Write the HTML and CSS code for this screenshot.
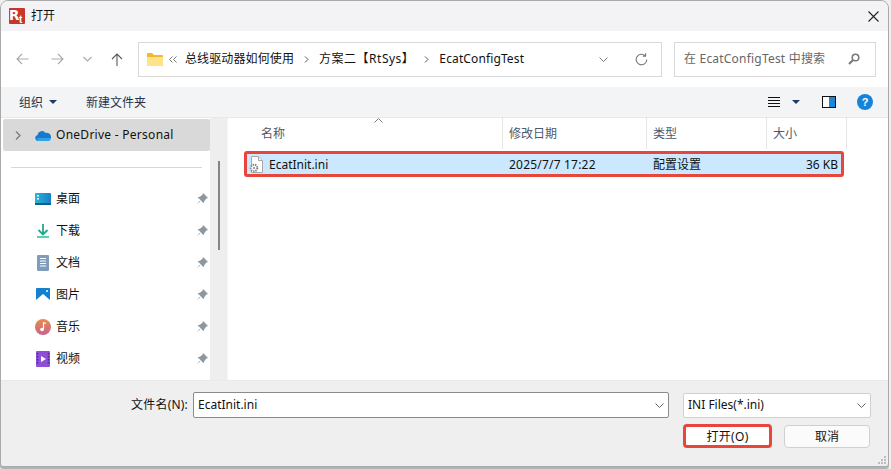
FILE: index.html

```html
<!DOCTYPE html>
<html lang="zh-CN">
<head>
    <meta charset="UTF-8">
    <meta name="viewport" content="width=device-width, initial-scale=1.0">
    <title>打开</title>
    <link rel="stylesheet" href="styles.css">
</head>
<body>
    <div class="dialog">
        <!-- Title bar -->
        <header class="titlebar">
            <svg class="app-logo" width="16" height="16" viewBox="0 0 16 16">
                <rect width="16" height="16" rx="1" fill="#c8352b"/>
                <text x="0" y="11.500" font-family="DejaVu Sans" font-weight="700" font-size="13.500" fill="#fff">R</text>
                <text x="10" y="14.500" font-family="Liberation Sans" font-weight="700" font-size="10" fill="#fff">t</text>
            </svg>
            <span class="title-text">打开</span>
            <svg class="close-icon" width="11" height="11" viewBox="0 0 11 11"><path d="M.5.5l10 10M10.500.5l-10 10" stroke="#222" stroke-width="1.100" fill="none"/></svg>
        </header>

        <!-- Address row -->
        <div class="navrow">
            <svg class="nav-btn" width="13" height="12" viewBox="0 0 13 12"><path d="M12.500 6H1M6 1L1 6l5 5" stroke="#a9a9a9" stroke-width="1.100" fill="none"/></svg>
            <svg class="nav-btn fwd" width="13" height="12" viewBox="0 0 13 12"><path d="M.5 6H12M7 1l5 5-5 5" stroke="#a9a9a9" stroke-width="1.100" fill="none"/></svg>
            <svg class="nav-btn down" width="9" height="6" viewBox="0 0 9 6"><path d="M.5 1l4 4 4-4" stroke="#a9a9a9" stroke-width="1.100" fill="none"/></svg>
            <svg class="nav-btn up" width="12" height="13" viewBox="0 0 12 13"><path d="M6 13V1M1 6l5-5 5 5" stroke="#5a5a5a" stroke-width="1.100" fill="none"/></svg>
            <div class="address">
                <svg class="folder" width="16" height="13" viewBox="0 0 16 13">
                    <path d="M0 1q0-1 1-1h4l2 2h8q1 0 1 1v9q0 1-1 1H1q-1 0-1-1z" fill="#f2b92e"/>
                    <path d="M0 4h16v8q0 1-1 1H1q-1 0-1-1z" fill="#fde38a"/>
                </svg>
                <svg class="crumb-more" width="8" height="7" viewBox="0 0 8 7"><path d="M3.500.5l-3 3 3 3M7.500.5l-3 3 3 3" stroke="#777" fill="none"/></svg>
                <span class="crumb">总线驱动器如何使用</span>
                <svg class="crumb-sep" width="5" height="7" viewBox="0 0 5 7"><path d="M1 .5l3 3-3 3" stroke="#555" fill="none"/></svg>
                <span class="crumb crumb-wide">方案二【RtSys】</span>
                <svg class="crumb-sep" width="5" height="7" viewBox="0 0 5 7"><path d="M1 .5l3 3-3 3" stroke="#555" fill="none"/></svg>
                <span class="crumb">EcatConfigTest</span>
                <svg class="addr-down" width="9" height="5" viewBox="0 0 9 5"><path d="M.5.5l4 4 4-4" stroke="#777" fill="none"/></svg>
                <svg class="refresh" width="13" height="13" viewBox="0 0 13 13"><path d="M11.800 6.500a5.300 5.300 0 1 1-1.700-3.900M10.600.3v2.800H7.800" stroke="#777" stroke-width="1.100" fill="none"/></svg>
            </div>
            <div class="search">
                <span>在 EcatConfigTest 中搜索</span>
                <svg width="12" height="12" viewBox="0 0 12 12"><circle cx="7.500" cy="4.500" r="3.300" stroke="#777" stroke-width="1.500" fill="none"/><path d="M5 7L1 11" stroke="#777" stroke-width="2"/></svg>
            </div>
        </div>

        <!-- Toolbar -->
        <div class="toolbar">
            <span class="tool">组织</span>
            <i class="caret"></i>
            <span class="tool new-folder">新建文件夹</span>
            <div class="tool-right">
                <svg width="12" height="11" viewBox="0 0 12 11"><path d="M0 .5h12M0 3.500h12M0 6.500h12M0 9.500h12" stroke="#111"/></svg>
                <i class="caret view-caret"></i>
                <svg class="pane-icon" width="14" height="12" viewBox="0 0 14 12"><rect x=".5" y=".5" width="13" height="11" fill="#fff" stroke="#111"/><rect x="7" y="1" width="6" height="10" fill="#1a86d8"/></svg>
                <svg class="help-icon" width="16" height="16" viewBox="0 0 16 16"><circle cx="8" cy="8" r="8" fill="#1683d8"/><text x="8" y="12" text-anchor="middle" font-family="Liberation Sans" font-weight="700" font-size="11" fill="#fff">?</text></svg>
            </div>
        </div>

        <!-- Main area -->
        <div class="main">
            <aside class="sidebar">
                <div class="tree-onedrive">
                    <svg class="tree-arrow" width="6" height="9" viewBox="0 0 6 9"><path d="M1 .5l4 4-4 4" stroke="#777" stroke-width="1.200" fill="none"/></svg>
                    <svg width="16" height="11" viewBox="0 0 16 11"><path d="M3 11a3 3 0 0 1-.5-5.900A4.500 4.500 0 0 1 10.600 3 3.500 3.500 0 0 1 13 11z" fill="#1a78d0"/><path d="M3 11a3 3 0 0 1-.5-3h13q.5 3-2.500 3z" fill="#2da3e8"/></svg>
                    <span>OneDrive - Personal</span>
                </div>
                <hr class="side-rule">
                <ul class="quick-list">
                    <li>
                        <span class="quick-icon"><svg width="16" height="12" viewBox="0 0 16 12"><defs><linearGradient id="desk" x1="0" y1="0" x2="1" y2="0"><stop offset="0" stop-color="#25b7d8"/><stop offset="1" stop-color="#1a7fc8"/></linearGradient></defs><rect width="16" height="12" rx="1" fill="url(#desk)"/><rect x="2" y="2" width="2" height="1.500" fill="#fff"/><rect x="2" y="5" width="2" height="1.500" fill="#fff"/><rect y="10" width="16" height="2" fill="#10608f"/></svg></span>
                        <span class="quick-text">桌面</span>
                        <svg class="pin" width="12" height="12" viewBox="0 0 11 11"><path d="M6.500 0L11 4.500 9.500 5 7.500 7.500 7 9.500 1.500 4 3.500 3.500 6 1.500zM3.500 7L.5 10.500 4 7.500z" fill="#8d97a1"/></svg>
                    </li>
                    <li>
                        <span class="quick-icon"><svg width="14" height="14" viewBox="0 0 14 14"><path d="M7 0v10M2.500 6L7 10.500 11.500 6" stroke="#23a98d" stroke-width="1.800" fill="none"/><path d="M1 13h12" stroke="#22c29a" stroke-width="1.500"/></svg></span>
                        <span class="quick-text">下载</span>
                        <svg class="pin" width="12" height="12" viewBox="0 0 11 11"><path d="M6.500 0L11 4.500 9.500 5 7.500 7.500 7 9.500 1.500 4 3.500 3.500 6 1.500zM3.500 7L.5 10.500 4 7.500z" fill="#8d97a1"/></svg>
                    </li>
                    <li>
                        <span class="quick-icon"><svg width="12" height="16" viewBox="0 0 12 16"><rect width="12" height="16" rx="1" fill="#7f9cbc"/><path d="M3 3.500h6M3 6h6M3 8.500h6M3 11h6" stroke="#fff"/></svg></span>
                        <span class="quick-text">文档</span>
                        <svg class="pin" width="12" height="12" viewBox="0 0 11 11"><path d="M6.500 0L11 4.500 9.500 5 7.500 7.500 7 9.500 1.500 4 3.500 3.500 6 1.500zM3.500 7L.5 10.500 4 7.500z" fill="#8d97a1"/></svg>
                    </li>
                    <li>
                        <span class="quick-icon"><svg width="14" height="14" viewBox="0 0 14 14"><rect width="14" height="14" rx="1" fill="#1580d0"/><path d="M0 12l7-6 7 6v2H0z" fill="#fff"/><circle cx="11" cy="3" r="1" fill="#fff"/></svg></span>
                        <span class="quick-text">图片</span>
                        <svg class="pin" width="12" height="12" viewBox="0 0 11 11"><path d="M6.500 0L11 4.500 9.500 5 7.500 7.500 7 9.500 1.500 4 3.500 3.500 6 1.500zM3.500 7L.5 10.500 4 7.500z" fill="#8d97a1"/></svg>
                    </li>
                    <li>
                        <span class="quick-icon"><svg width="16" height="16" viewBox="0 0 16 16"><defs><linearGradient id="music" x1="0" y1="0" x2="0" y2="1"><stop offset="0" stop-color="#ea8a4c"/><stop offset="1" stop-color="#c8648c"/></linearGradient></defs><circle cx="8" cy="8" r="8" fill="url(#music)"/><path d="M8.500 3.500v7" stroke="#fff" stroke-width="1.200"/><path d="M8.500 3.500l2.500 1" stroke="#fff" stroke-width="1.200"/><circle cx="7" cy="10.500" r="1.800" fill="#fff"/></svg></span>
                        <span class="quick-text">音乐</span>
                        <svg class="pin" width="12" height="12" viewBox="0 0 11 11"><path d="M6.500 0L11 4.500 9.500 5 7.500 7.500 7 9.500 1.500 4 3.500 3.500 6 1.500zM3.500 7L.5 10.500 4 7.500z" fill="#8d97a1"/></svg>
                    </li>
                    <li>
                        <span class="quick-icon"><svg width="14" height="16" viewBox="0 0 14 16"><rect width="14" height="16" rx="1" fill="#8f4fd8"/><path d="M5 5l5 3-5 3z" fill="#fff"/><path d="M1.500 2v12M12.500 2v12" stroke="#4a2590" stroke-width="1.500" stroke-dasharray="1.500 1.500"/></svg></span>
                        <span class="quick-text">视频</span>
                        <svg class="pin" width="12" height="12" viewBox="0 0 11 11"><path d="M6.500 0L11 4.500 9.500 5 7.500 7.500 7 9.500 1.500 4 3.500 3.500 6 1.500zM3.500 7L.5 10.500 4 7.500z" fill="#8d97a1"/></svg>
                    </li>
                </ul>
            </aside>
            <div class="side-scroll"><div class="side-thumb"></div></div>

            <section class="files">
                <div class="file-head">
                    <svg class="sort-arrow" width="9" height="5" viewBox="0 0 9 5"><path d="M.5 4.500l4-4 4 4" stroke="#777" fill="none"/></svg>
                    <span class="col col-name"><span>名称</span></span>
                    <span class="col col-date"><span>修改日期</span></span>
                    <span class="col col-type"><span>类型</span></span>
                    <span class="col col-size"><span>大小</span></span>
                </div>
                <div class="file-row">
                    <svg class="ini-icon" width="15" height="17" viewBox="0 0 15 17"><path d="M2.500.5h7l4 4v12h-11z" fill="#fff" stroke="#a8a8a8"/><path d="M9.500.5v4h4" fill="#eee" stroke="#a8a8a8"/><circle cx="5" cy="12" r="3.300" fill="#fff" stroke="#858585" stroke-width="2" stroke-dasharray="1.400 .9"/><circle cx="5" cy="12" r="1" fill="#858585"/></svg>
                    <span class="cell-name">EcatInit.ini</span>
                    <span class="cell-date">2025/7/7 17:22</span>
                    <span class="cell-type">配置设置</span>
                    <span class="cell-size">36 KB</span>
                </div>
            </section>
        </div>

        <!-- Footer -->
        <footer class="footer">
            <div class="name-row">
                <label class="name-label">文件名(N):</label>
                <div class="field name-field">
                    <span>EcatInit.ini</span>
                    <svg width="9" height="5" viewBox="0 0 9 5"><path d="M.5.5l4 4 4-4" stroke="#666" fill="none"/></svg>
                </div>
                <div class="field filter-field">
                    <span>INI Files(*.ini)</span>
                    <svg width="9" height="5" viewBox="0 0 9 5"><path d="M.5.5l4 4 4-4" stroke="#666" fill="none"/></svg>
                </div>
            </div>
            <div class="btn-row">
                <button class="btn btn-open">打开(O)</button>
                <button class="btn btn-cancel">取消</button>
            </div>
            <svg class="grip" width="8" height="8" viewBox="0 0 8 8"><path d="M6 0h2v2H6zM3 3h2v2H3zM6 3h2v2H6zM0 6h2v2H0zM3 6h2v2H3zM6 6h2v2H6z" fill="#bdbdbd"/></svg>
        </footer>
    </div>
</body>
</html>
```

FILE: styles.css

```css
/* Base */
* {
    margin: 0;
    padding: 0;
    box-sizing: border-box;
}

body {
    width: 891px;
    height: 469px;
    overflow: hidden;
    background: #f0f0f0;
    font-family: "Noto Sans", "Noto Sans CJK SC", sans-serif;
    font-size: 12px;
    color: #111;
    text-spacing-trim: space-all;
}

svg {
    display: block;
    flex: none;
}

/* Window */
.dialog {
    width: 889px;
    height: 467px;
    border: 1px solid #a9a9a9;
    border-radius: 8px 8px 3px 3px;
    box-shadow: 0 2px 0 #b4b4b4;
    overflow: hidden;
    display: flex;
    flex-direction: column;
    background: #efefef;
}

/* Title bar */
.titlebar {
    height: 30px;
    flex: none;
    display: flex;
    align-items: center;
    padding: 0 9px 0 8px;
    background: #f3f2f4;
}

.title-text {
    margin: 0 0 2px 6px;
}

.close-icon {
    margin-left: auto;
}

/* Address row */
.navrow {
    height: 56px;
    flex: none;
    display: flex;
    align-items: center;
    background: #fff;
}

.nav-btn {
    margin-left: 15px;
}

.nav-btn.fwd {
    margin-left: 22px;
}

.nav-btn.down {
    margin-left: 19px;
}

.nav-btn.up {
    margin-left: 19px;
    margin-right: 15px;
}

.address {
    width: 524px;
    height: 35px;
    display: flex;
    align-items: center;
    border: 1px solid #d9d9d9;
    padding-left: 8px;
}

.crumb-more {
    margin: 0 8px 0 6px;
}

.crumb {
    letter-spacing: 0.12px;
    margin-bottom: 2px;
}

.crumb-wide {
    letter-spacing: 0.5px;
}

.crumb-sep {
    margin: 0 10px 0 10px;
}

.addr-down {
    margin-left: auto;
}

.refresh {
    margin: 0 13px 0 27px;
}

.search {
    width: 202px;
    height: 35px;
    margin-left: 12px;
    display: flex;
    align-items: center;
    justify-content: space-between;
    border: 1px solid #d9d9d9;
    padding: 0 15px 0 9px;
    color: #666;
}

.search span {
    letter-spacing: 0.2px;
    margin-bottom: 2px;
}

/* Toolbar */
.toolbar {
    height: 31px;
    flex: none;
    display: flex;
    align-items: center;
    padding-left: 18px;
    background: #f3f4f6;
    border-bottom: 1px solid #e8e8e8;
}

.tool {
    color: #24344f;
}

.caret {
    width: 0;
    height: 0;
    margin-left: 6px;
    border: 4px solid transparent;
    border-top: 4px solid #1f3864;
    border-bottom: 0;
}

.new-folder {
    margin-left: 29px;
}

.tool-right {
    margin-left: auto;
    display: flex;
    align-items: center;
    padding-right: 15px;
}

.view-caret {
    margin-left: 12px;
}

.pane-icon {
    margin-left: 22px;
}

.help-icon {
    margin-left: 21px;
}

/* Main */
.main {
    flex: 1;
    min-height: 0;
    display: flex;
    background: #fff;
}

.sidebar {
    width: 209px;
    flex: none;
    padding: 1px 0 0 2px;
}

.tree-onedrive {
    height: 32px;
    display: flex;
    align-items: center;
    background: #d9d9d9;
    border-radius: 2px;
    padding-left: 12px;
    margin-bottom: 16px;
}

.tree-onedrive span {
    margin: 0 0 2px 5px;
    letter-spacing: 0.27px;
}

.tree-arrow {
    margin-right: 14px;
}

.side-rule {
    height: 1px;
    border: 0;
    background: #d8d8d8;
    margin: 0 8px 15px 8px;
}

.quick-list {
    list-style: none;
}

.quick-list li {
    height: 32px;
    display: flex;
    align-items: center;
}

.quick-icon {
    width: 16px;
    margin: 0 5px 0 32px;
    display: flex;
    justify-content: center;
}

.quick-text {
    margin-bottom: 2px;
}

.pin {
    margin: 0 2px 0 auto;
}

.side-scroll {
    width: 17px;
    flex: none;
    background: #eeeeee;
    padding: 43px 0 0 8px;
}

.side-thumb {
    width: 2px;
    height: 89px;
    background: #858585;
}

/* File list */
.files {
    flex: 1;
    border-left: 1px solid #f4f4f4;
}

.file-head {
    height: 31px;
    display: flex;
    color: #4c5a6c;
    position: relative;
}

.sort-arrow {
    position: absolute;
    left: 146px;
    top: 0;
}

.col {
    display: flex;
    align-items: center;
    padding-left: 6px;
    border-right: 1px solid #e5e5e5;
}

.col span {
    margin-bottom: 2px;
}

.col-name {
    width: 275px;
    padding-left: 33px;
}

.col-date {
    width: 144px;
}

.col-type {
    width: 120px;
}

.col-size {
    width: 80px;
}

.file-row {
    width: 600px;
    height: 26px;
    margin: 2px 0 0 16px;
    display: flex;
    align-items: center;
    background: #cce8ff;
    border: 3px solid #e8453c;
    border-radius: 3px;
    padding-left: 2px;
}

.cell-name {
    margin-left: 5px;
    width: 240px;
}

.cell-date {
    width: 144px;
    letter-spacing: 0.2px;
}

.cell-type {
    width: 120px;
}

.cell-size {
    width: 65px;
    text-align: right;
}

/* Footer */
.footer {
    height: 86px;
    flex: none;
    padding-top: 11px;
    border-top: 1px solid #eaeaea;
    position: relative;
}

.name-row {
    display: flex;
    align-items: center;
}

.name-label {
    width: 187px;
    text-align: right;
    letter-spacing: 0.2px;
    margin-bottom: 2px;
}

.field {
    height: 26px;
    display: flex;
    align-items: center;
    justify-content: space-between;
    background: #fff;
    border: 1px solid #d0d0d0;
    border-radius: 2px;
    padding: 0 4px;
}

.field span {
    margin-bottom: 2px;
}

.name-field {
    width: 476px;
    margin-left: 5px;
    border-color: #8a8a8a;
}

.filter-field {
    width: 188px;
    height: 25px;
    margin-left: 14px;
}

.btn-row {
    display: flex;
    margin: 6px 0 0 682px;
    align-items: center;
}

.btn {
    font: inherit;
    color: #111;
    background: #fbfbfb;
    border: 1px solid #d0d0d0;
    border-radius: 4px;
}

.btn-open {
    width: 89px;
    height: 24px;
    border: 3px solid #e8453c;
    background: #fff;
    letter-spacing: 0.3px;
}

.btn-cancel {
    width: 86px;
    height: 23px;
    margin-left: 12px;
}

.grip {
    position: absolute;
    right: 2px;
    bottom: 2px;
}
```
